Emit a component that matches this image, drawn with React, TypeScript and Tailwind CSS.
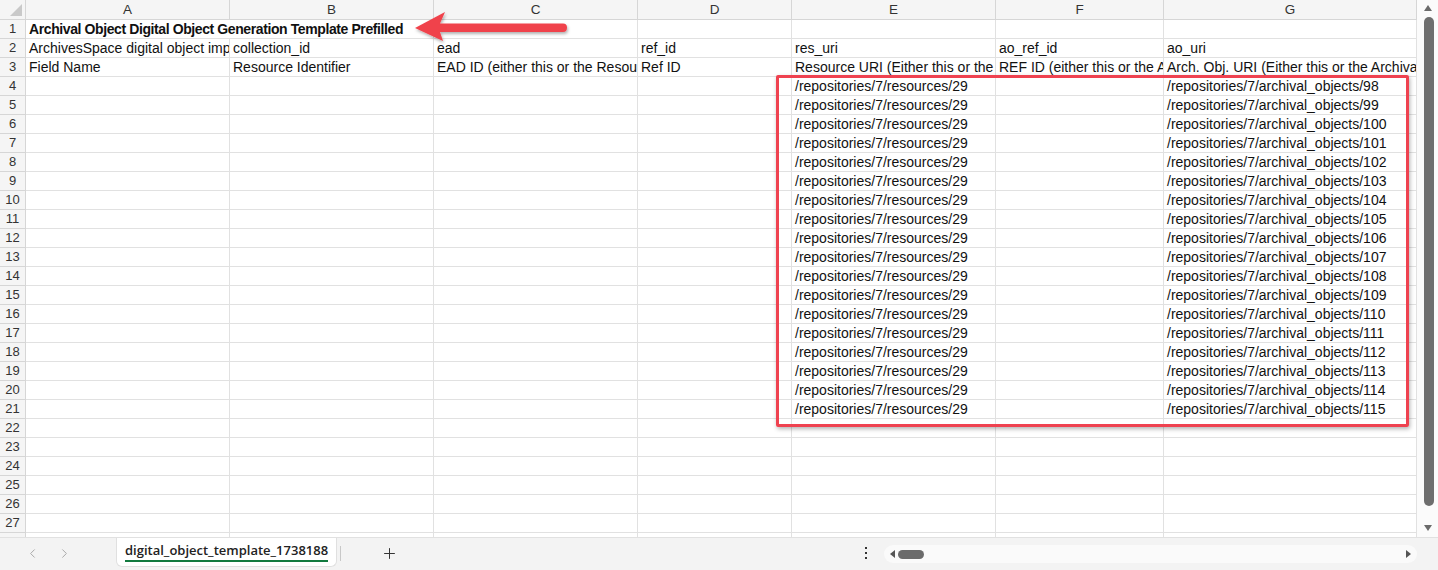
import { ChevronLeft, ChevronRight, Plus } from 'lucide-react';

const colWidths = ['w-[204px]', 'w-[204px]', 'w-[204px]', 'w-[154px]', 'w-[204px]', 'w-[168px]', 'w-[253px]'];
const letters = ['A', 'B', 'C', 'D', 'E', 'F', 'G'];

const cellBase =
  'shrink-0 h-full border-r border-b border-[#e1e1e1] pl-[3px] pr-[1px] overflow-hidden whitespace-nowrap leading-[18px]';

function rowCells(n: number): string[] {
  if (n === 2)
    return ['ArchivesSpace digital object import template', 'collection_id', 'ead', 'ref_id', 'res_uri', 'ao_ref_id', 'ao_uri'];
  if (n === 3)
    return [
      'Field Name',
      'Resource Identifier',
      'EAD ID (either this or the Resource Identifier is required)',
      'Ref ID',
      'Resource URI (Either this or the EAD ID or Resource Identifier is required)',
      'REF ID (either this or the Archival Object URI is required)',
      'Arch. Obj. URI (Either this or the Archival Object REF ID is required)',
    ];
  if (n >= 4 && n <= 21)
    return ['', '', '', '', '/repositories/7/resources/29', '', `/repositories/7/archival_objects/${94 + n}`];
  return ['', '', '', '', '', '', ''];
}

function RowHead({ n }: { n: number }) {
  return (
    <div className="w-[26px] shrink-0 h-full bg-[#f5f5f5] border-r border-b border-[#d6d6d6] text-center text-[13px] leading-[18px] text-[#333]">
      {n}
    </div>
  );
}

export default function App() {
  const rows = Array.from({ length: 28 }, (_, i) => i + 1);

  return (
    <div className="relative w-[1438px] h-[570px] overflow-hidden bg-white flex flex-col font-['Liberation_Sans',Arial,sans-serif] text-[14px] text-[#111]">
      <div className="flex h-[537px] shrink-0">
        {/* sheet */}
        <div className="w-[1417px] shrink-0 overflow-hidden">
          <div className="flex h-[20px]">
            <div className="relative w-[26px] shrink-0 h-full bg-[#f5f5f5] border-r border-b border-[#d6d6d6]">
              <div className="absolute right-[3px] bottom-[3px] w-0 h-0 [border-bottom:12px_solid_#c9c9c9] [border-left:12px_solid_transparent]" />
            </div>
            {letters.map((l, i) => (
              <div
                key={l}
                className={`${colWidths[i]} shrink-0 h-full bg-[#f5f5f5] border-r border-b border-[#d6d6d6] text-center text-[13.5px] leading-[19px] text-[#333]`}
              >
                {l}
              </div>
            ))}
          </div>

          {rows.map((n) => {
            if (n === 1) {
              return (
                <div key={n} className="flex h-[19px]">
                  <RowHead n={n} />
                  <div className="w-[408px] shrink-0 h-full border-r border-b border-[#e1e1e1] pl-[3px] whitespace-nowrap leading-[18px] font-bold tracking-[-0.4px]">
                    Archival Object Digital Object Generation Template Prefilled
                  </div>
                  {colWidths.slice(2).map((w, i) => (
                    <div key={i} className={`${w} ${cellBase}`} />
                  ))}
                </div>
              );
            }
            const cells = rowCells(n);
            return (
              <div key={n} className="flex h-[19px]">
                <RowHead n={n} />
                {cells.map((c, i) => (
                  <div key={i} className={`${colWidths[i]} ${cellBase}`}>
                    {c}
                  </div>
                ))}
              </div>
            );
          })}
        </div>

        {/* vertical scrollbar */}
        <div className="flex-1 flex flex-col items-center bg-[#fbfbfb] pt-[4px] pb-[3px]">
          <svg width="10" height="8" viewBox="0 0 10 8" className="mb-[5px]">
            <path d="M5 1 L9 7 L1 7 Z" fill="#6b6b6b" />
          </svg>
          <div className="w-[10px] flex-1 rounded-full bg-[#6e6e6e] ml-[2px]" />
          <svg width="10" height="8" viewBox="0 0 10 8" className="mt-[18px] mb-[2px]">
            <path d="M1 1 L9 1 L5 7 Z" fill="#6b6b6b" />
          </svg>
        </div>
      </div>

      {/* bottom sheet bar */}
      <div className="flex-1 flex items-start bg-[#f3f3f3] border-t border-[#e1e1e1]">
        <div className="flex items-center gap-[17px] pl-[25px] pt-[8px] text-[#a3a3a3]">
          <ChevronLeft size={15} strokeWidth={1.5} />
          <ChevronRight size={15} strokeWidth={1.5} />
        </div>
        <div className="ml-[44px] h-[29px] bg-white border border-t-0 border-[#e0e0e0] rounded-b-[6px] px-[8px] flex flex-col justify-center">
          <span className="font-['Open_Sans',sans-serif] font-semibold text-[13px] leading-[17px] text-[#222] border-b-2 border-[#127a3f] pb-[1px]">
            digital_object_template_1738188
          </span>
        </div>
        <div className="mt-[8px] ml-[3px] w-px h-[15px] bg-[#c8c8c8]" />
        <div className="ml-[40px] mt-[7px] text-[#333]">
          <Plus size={17} strokeWidth={1.4} />
        </div>
        <div className="ml-[467px] mt-[9px] flex flex-col gap-[3px]">
          <div className="w-[2px] h-[2px] bg-[#333]" />
          <div className="w-[2px] h-[2px] bg-[#333]" />
          <div className="w-[2px] h-[2px] bg-[#333]" />
        </div>
        <div className="ml-[17px] mt-[7px] w-[533px] h-[18px] rounded-full bg-[#fafafa] flex items-center px-[5px]">
          <svg width="7" height="10" viewBox="0 0 7 10">
            <path d="M6 1 L6 9 L1 5 Z" fill="#555" />
          </svg>
          <div className="ml-[2px] w-[26px] h-[9px] rounded-full bg-[#6b6b6b]" />
          <div className="flex-1" />
          <svg width="7" height="10" viewBox="0 0 7 10">
            <path d="M1 1 L1 9 L6 5 Z" fill="#555" />
          </svg>
        </div>
      </div>

      {/* callout arrow */}
      <svg
        className="absolute left-[405px] top-[6px] pointer-events-none"
        width="172"
        height="42"
        viewBox="0 0 172 42"
      >
        <defs>
          <filter id="sh" x="-10%" y="-30%" width="120%" height="170%">
            <feDropShadow dx="1" dy="2" stdDeviation="1.5" floodColor="#000" floodOpacity="0.3" />
          </filter>
        </defs>
        <g filter="url(#sh)" fill="#f0424b">
          <path d="M10 22 L40 6 L35 17.5 L158 17.5 Q162 17.5 162 21.5 Q162 26 158 26 L35 26 L38 35 Z" />
        </g>
      </svg>

      {/* highlight box */}
      <div className="absolute left-[776px] top-[75px] w-[633px] h-[352px] border-[3px] border-[#ef4250] rounded-[2px] shadow-[1px_2px_4px_rgba(0,0,0,0.3)] pointer-events-none" />
    </div>
  );
}
